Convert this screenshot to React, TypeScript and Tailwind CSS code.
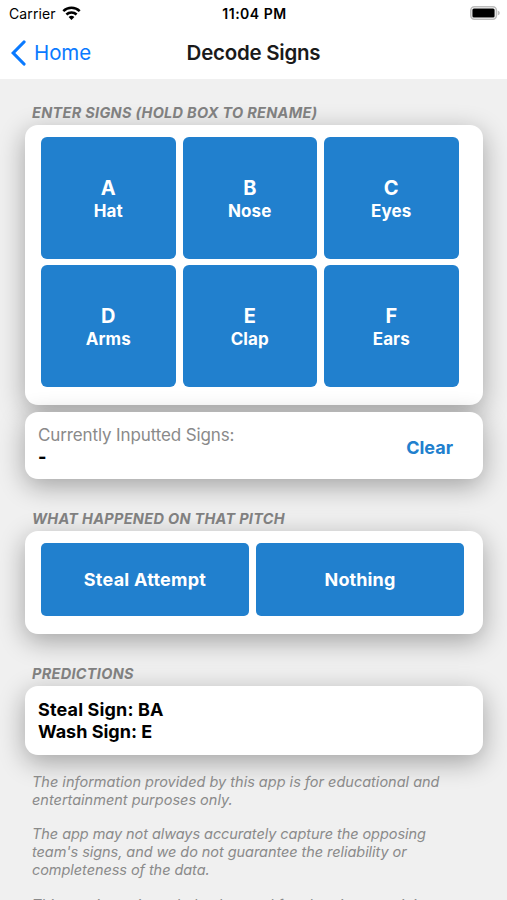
import React, { useState } from 'react';

interface Sign {
  id: string;
  name: string;
}

const signs: Sign[] = [
  { id: 'A', name: 'Hat' },
  { id: 'B', name: 'Nose' },
  { id: 'C', name: 'Eyes' },
  { id: 'D', name: 'Arms' },
  { id: 'E', name: 'Clap' },
  { id: 'F', name: 'Ears' },
];

const cardClass = 'rounded-[13px] bg-white shadow-[0_7px_27px_rgba(0,0,0,0.33)]';

const StatusBar: React.FC = () => (
  <div className="grid h-[27px] grid-cols-3 items-center pl-[9px] pr-[7px] text-[14px] text-black">
    <div className="flex items-center gap-[6px]">
      <span className="tracking-[0.1px]">Carrier</span>
      <svg className="mb-[2px]" width="19" height="14" viewBox="0 0 19 14" fill="none" stroke="#000" strokeWidth="2.5">
        <path d="M1.3 5.2a11.7 11.7 0 0 1 16.4 0" />
        <path d="M4.4 8.5a7.3 7.3 0 0 1 10.2 0" />
        <path d="M9.5 14 6.6 11.1a4.1 4.1 0 0 1 5.8 0z" fill="#000" stroke="none" />
      </svg>
    </div>
    <span className="text-center font-semibold tracking-[0.5px] whitespace-nowrap">11:04 PM</span>
    <svg className="mb-px justify-self-end" width="30" height="14" viewBox="0 0 30 14">
      <rect x="0.8" y="0.8" width="25.6" height="12.4" rx="3.6" fill="#fff" stroke="#bdbdbd" strokeWidth="1.6" />
      <rect x="2.4" y="2.5" width="22.2" height="9" rx="1.5" fill="#000" />
      <path d="M27.8 4.7v4.600c1.200-.3 2-1.200 2-2.300s-.8-2-2-2.300z" fill="#bdbdbd" />
    </svg>
  </div>
);

const SectionTitle: React.FC<{ children: React.ReactNode }> = ({ children }) => (
  <h2 className="pl-[7px] text-[14.5px] leading-[18px] font-bold italic tracking-[0.3px] text-[#808080]">
    {children}
  </h2>
);

const App: React.FC = () => {
  const [inputted, setInputted] = useState('');

  return (
    <div className="h-[900px] w-[507px] overflow-hidden bg-[#f0f0f0] font-[Inter,sans-serif]">
      <header className="h-[79px] bg-white">
        <StatusBar />
        <div className="grid h-[51px] grid-cols-[1fr_auto_1fr] items-center">
          <button className="flex items-center gap-[8px] pt-px pl-[11px] text-[20.500px] tracking-[-0.1px] text-[#0a7aff]">
            <svg width="15" height="26" viewBox="0 0 15 26" fill="none" stroke="currentColor" strokeWidth="3.2" strokeLinecap="round">
              <path d="M13 2 2.200 13 13 24" />
            </svg>
            <span className="pt-px">Home</span>
          </button>
          <h1 className="pt-[2px] text-[20.500px] font-semibold tracking-[-0.25px] text-[#1a1a1a]">Decode Signs</h1>
        </div>
      </header>

      <main className="pt-[25px] pr-[24px] pl-[25px]">
        <SectionTitle>ENTER SIGNS (HOLD BOX TO RENAME)</SectionTitle>
        <section className={`${cardClass} mt-[3px] h-[280px] pt-[12px] pl-[16px]`}>
          <div className="grid w-[417.500px] grid-cols-3 gap-x-[7px] gap-y-[6px]">
            {signs.map((sign) => (
              <button
                key={sign.id}
                onClick={() => setInputted(inputted + sign.id)}
                className="flex h-[122px] flex-col items-center justify-center rounded-[6px] bg-[#2180ce] pt-[2px] font-bold text-white"
              >
                <span className="text-[20px] leading-[25px]">{sign.id}</span>
                <span className="text-[17px] leading-[21px] tracking-[0.1px]">{sign.name}</span>
              </button>
            ))}
          </div>
        </section>

        <section className={`${cardClass} mt-[7px] flex h-[67px] items-center justify-between pr-[30px] pl-[13px]`}>
          <div>
            <p className="text-[17px] leading-[22px] tracking-[-0.12px] text-[#8a8a8a]">Currently Inputted Signs:</p>
            <p className="text-[18px] leading-[21px] font-extrabold text-black">{inputted || '-'}</p>
          </div>
          <button onClick={() => setInputted('')} className="pt-[4px] text-[18px] font-bold text-[#2180ce]">
            Clear
          </button>
        </section>

        <div className="h-[31px]" />
        <SectionTitle>WHAT HAPPENED ON THAT PITCH</SectionTitle>
        <section className={`${cardClass} mt-[3px] h-[103px] px-[16px] pt-[12px]`}>
          <div className="flex gap-[7px]">
            <button className="h-[73px] w-[208px] rounded-[5px] bg-[#2180ce] text-[18px] font-bold tracking-[0.25px] text-white">
              Steal Attempt
            </button>
            <button className="h-[73px] w-[208px] rounded-[5px] bg-[#2180ce] text-[18px] font-bold tracking-[0.1px] text-white">
              Nothing
            </button>
          </div>
        </section>

        <div className="h-[31px]" />
        <SectionTitle>PREDICTIONS</SectionTitle>
        <section className={`${cardClass} mt-[3px] h-[69px] pt-[13px] pl-[13px] text-[18px] leading-[22px] font-bold tracking-[0.15px] text-black`}>
          <p>Steal Sign: BA</p>
          <p className="tracking-[0px]">Wash Sign: E</p>
        </section>

        <div className="mt-[18px] flex flex-col gap-[17px] pl-[7px] text-[14.500px] leading-[17.700px] whitespace-nowrap text-[#8a8a8a] italic">
          <p>
            The information provided by this app is for educational and
            <br />
            entertainment purposes only.
          </p>
          <p className="tracking-[-0.06px]">
            The app may not always accurately capture the opposing
            <br />
            team's signs, and we do not guarantee the reliability or
            <br />
            completeness of the data.
          </p>
          <p>This app is not intended to be used for cheating or gaining</p>
        </div>
      </main>
    </div>
  );
};

export default App;
